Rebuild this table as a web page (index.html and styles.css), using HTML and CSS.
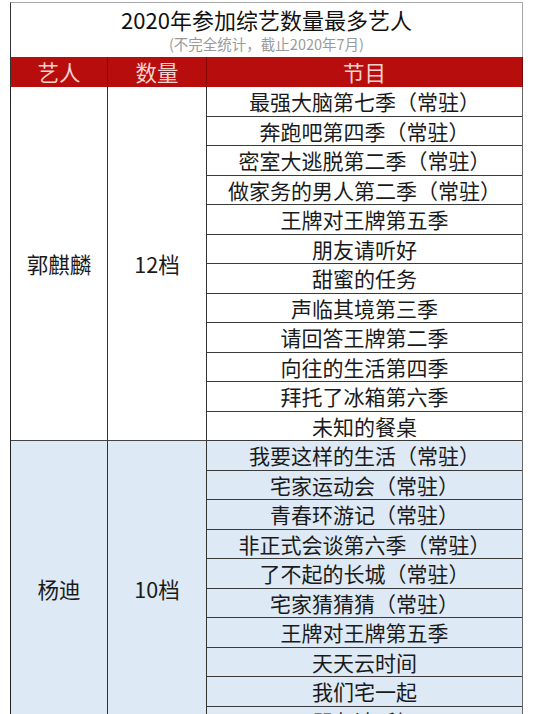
FILE: index.html
```html
<!DOCTYPE html>
<html lang="zh">
<head>
<meta charset="utf-8">
<link rel="stylesheet" href="styles.css">
</head>
<body>
<div class="sheet">
  <div class="title">
    <div class="main">2020年参加综艺数量最多艺人</div>
    <div class="sub">(不完全统计，截止2020年7月)</div>
  </div>
  <div class="head">
    <div class="hcell">艺人</div>
    <div class="hcell">数量</div>
    <div class="hcell last">节目</div>
  </div>
  <div class="group">
    <div class="cell name">郭麒麟</div>
    <div class="cell count">12档</div>
    <div class="list">
      <div class="item">最强大脑第七季（常驻）</div>
      <div class="item">奔跑吧第四季（常驻）</div>
      <div class="item">密室大逃脱第二季（常驻）</div>
      <div class="item">做家务的男人第二季（常驻）</div>
      <div class="item">王牌对王牌第五季</div>
      <div class="item">朋友请听好</div>
      <div class="item">甜蜜的任务</div>
      <div class="item">声临其境第三季</div>
      <div class="item">请回答王牌第二季</div>
      <div class="item">向往的生活第四季</div>
      <div class="item">拜托了冰箱第六季</div>
      <div class="item">未知的餐桌</div>
    </div>
  </div>
  <div class="group blue">
    <div class="cell name">杨迪</div>
    <div class="cell count">10档</div>
    <div class="list">
      <div class="item">我要这样的生活（常驻）</div>
      <div class="item">宅家运动会（常驻）</div>
      <div class="item">青春环游记（常驻）</div>
      <div class="item">非正式会谈第六季（常驻）</div>
      <div class="item">了不起的长城（常驻）</div>
      <div class="item">宅家猜猜猜（常驻）</div>
      <div class="item">王牌对王牌第五季</div>
      <div class="item">天天云时间</div>
      <div class="item">我们宅一起</div>
      <div class="item">朋友请听好</div>
    </div>
  </div>
</div>
</body>
</html>
```
FILE: styles.css
```css
html, body {
  margin: 0;
  padding: 0;
  background: #ffffff;
}
body {
  font-family: "Noto Sans CJK SC", "Noto Sans", sans-serif;
  color: #1a1a1a;
  overflow: hidden;
  height: 714px;
}
.sheet {
  margin: 2px 0 0 10px;
  width: 513px;
}
.title {
  box-sizing: border-box;
  height: 55px;
  border: 1px solid #a8a8a8;
  border-bottom: none;
  border-left: 1.5px solid #333;
  text-align: center;
}
.title .main {
  font-size: 22px;
  line-height: 28px;
  padding-top: 2px;
  color: #111;
}
.title .sub {
  font-size: 14.5px;
  line-height: 20px;
  color: #9a9a9a;
  margin-top: 1px;
}
.head {
  display: grid;
  grid-template-columns: 97px 99px 1fr;
  height: 30px;
  background: #b70d0d;
  border-left: 1.5px solid #333;
  box-sizing: border-box;
}
.hcell {
  color: #f7d3d0;
  font-size: 21.5px;
  line-height: 30px;
  text-align: center;
  border-right: 1px solid #8a0606;
}
.hcell.last {
  border-right: 1px solid #7a0505;
}
.group {
  display: grid;
  grid-template-columns: 97px 99px 1fr;
  border-left: 1.5px solid #222;
  border-right: 1px solid #666;
  box-sizing: border-box;
}
.group.blue {
  background: #dde9f4;
}
.cell {
  display: flex;
  align-items: center;
  justify-content: center;
  font-size: 21.5px;
  color: #1a1a1a;
  border-right: 1px solid #333;
  border-bottom: 1px solid #444;
}
.list {
  display: flex;
  flex-direction: column;
}
.item {
  box-sizing: border-box;
  height: 29.5px;
  border-bottom: 1px solid #3a3a3a;
  font-size: 21px;
  line-height: 28px;
  text-align: center;
  color: #1a1a1a;
  white-space: nowrap;
}
```
